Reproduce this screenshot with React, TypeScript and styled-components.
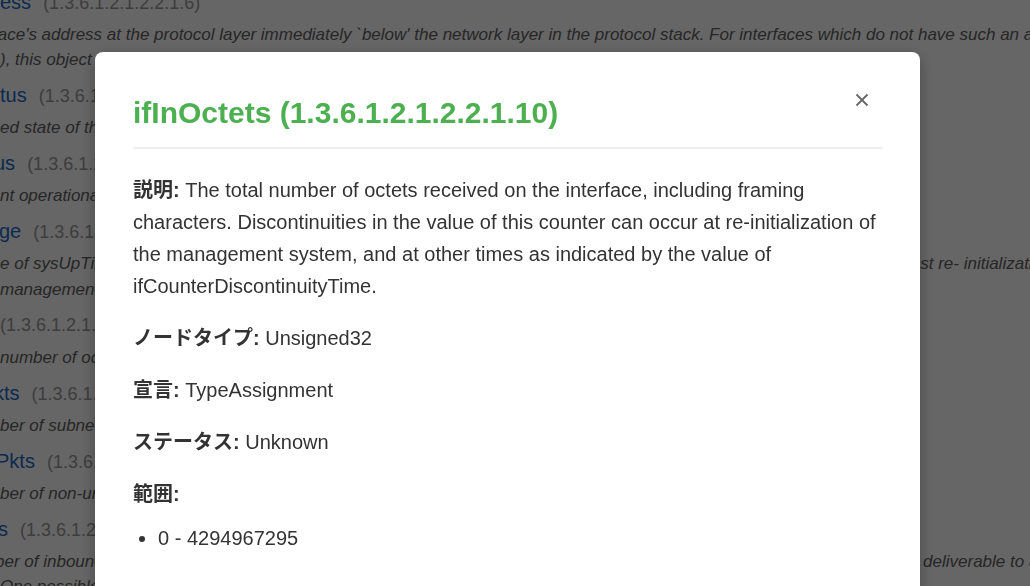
import React from "react";
import styled, { createGlobalStyle } from "styled-components";

const GlobalStyle = createGlobalStyle`
  html, body {
    margin: 0;
    padding: 0;
    overflow: hidden;
    background: #ffffff;
    font-family: "Liberation Sans", Arial, "Noto Sans CJK JP", sans-serif;
  }
  * { box-sizing: border-box; }
`;

/* ---------- background page (MIB object list, scrolled) ---------- */

const Page = styled.div`
  margin-top: -13.5px;
  white-space: nowrap;
  overflow: hidden;
  width: 1030px;
`;

const Entry = styled.section`
  margin-bottom: 7.5px;
`;

const EntryTitle = styled.div<{ $shift?: number }>`
  line-height: 30px;
  height: 30px;
  margin-bottom: 5px;
  text-indent: ${(p) => p.$shift ?? 0}px;
`;

const Name = styled.a`
  font-size: 20px;
  color: #1e6ac8;
  text-decoration: none;
`;

const Oid = styled.span<{ $flush?: boolean }>`
  font-size: 18px;
  color: #999999;
  margin-left: ${(p) => (p.$flush ? "0" : "12px")};
`;

const Desc = styled.div<{ $shift?: number }>`
  font-size: 17px;
  line-height: 25.5px;
  font-style: italic;
  color: #616161;
  text-indent: ${(p) => p.$shift ?? 0}px;
`;

/* ---------- modal ---------- */

const Overlay = styled.div`
  position: fixed;
  inset: 0;
  background: rgba(0, 0, 0, 0.6);
  display: flex;
  justify-content: center;
  align-items: flex-start;
  padding: 52px 15px 0 0;
`;

const Dialog = styled.div`
  width: 825px;
  background: #ffffff;
  border-radius: 8px;
  box-shadow: 0 5px 15px rgba(0, 0, 0, 0.3);
  padding: 43px 37px 40px 38px;
  font-family: "Liberation Sans", Arial, "Noto Sans CJK JP", sans-serif;
  color: #333333;
`;

const Header = styled.header`
  display: flex;
  justify-content: space-between;
  align-items: flex-start;
  padding-bottom: 16px;
  border-bottom: 2px solid #eeeeee;
`;

const Title = styled.h2`
  margin: 0;
  font-size: 30px;
  line-height: 36px;
  font-weight: 700;
  color: #4caf50;
`;

const CloseButton = styled.button`
  width: 20px;
  height: 20px;
  margin: -5px 11px 0 0;
  padding: 0;
  border: none;
  background: transparent;
  display: flex;
  align-items: center;
  justify-content: center;
  cursor: pointer;
`;

const Body = styled.div`
  padding-top: 25px;
  font-size: 20px;
  line-height: 32px;
`;

const Field = styled.p`
  margin: 0 0 20px;
`;

const Label = styled.strong`
  font-weight: 700;
  color: #333333;
`;

const RangeLabel = styled.div`
  font-weight: 700;
  margin-bottom: 12px;
`;

const RangeList = styled.ul`
  margin: 0;
  padding-left: 25px;
  list-style: disc;
`;

type Line = { text: string; shift?: number };

const entries: { name: string; oid: string; flush?: boolean; shift?: number; lines: Line[] }[] = [
  {
    name: "ess",
    oid: "(1.3.6.1.2.1.2.2.1.6)",
    lines: [
      {
        text: "face's address at the protocol layer immediately `below' the network layer in the protocol stack. For interfaces which do not have such an address (e.g., a serial line",
        shift: -7,
      },
      { text: "), this object should contain an octet string of zero length." },
    ],
  },
  {
    name: "tus",
    oid: "(1.3.6.1.2.1.2.2.1.7)",
    lines: [{ text: "ed state of the interface. The testing(3) state indicates that no operational packets can be passed." }],
  },
  {
    name: "us",
    oid: "(1.3.6.1.2.1.2.2.1.8)",
    shift: -6,
    lines: [{ text: "nt operational state of the interface. The testing(3) state indicates that no operational packets can be passed." }],
  },
  {
    name: "ge",
    oid: "(1.3.6.1.2.1.2.2.1.9)",
    shift: -1,
    lines: [
      {
        text: "e of sysUpTime at the time the interface entered its current operational state. If the current state was entered prior to the last re- initialization of the local network",
      },
      { text: "management subsystem, then this object contains a zero value." },
    ],
  },
  {
    name: "",
    oid: "(1.3.6.1.2.1.2.2.1.10)",
    flush: true,
    lines: [{ text: "number of octets received on the interface, including framing characters." }],
  },
  {
    name: "kts",
    oid: "(1.3.6.1.2.1.2.2.1.11)",
    shift: -6,
    lines: [{ text: "ber of subnetwork-unicast packets delivered to a higher-layer protocol." }],
  },
  {
    name: "Pkts",
    oid: "(1.3.6.1.2.1.2.2.1.12)",
    shift: -4,
    lines: [{ text: "ber of non-unicast packets delivered to a higher-layer protocol." }],
  },
  {
    name: "s",
    oid: "(1.3.6.1.2.1.2.2.1.13)",
    shift: -2,
    lines: [
      {
        text: "ber of inbound packets which were chosen to be discarded even though no errors had been detected to prevent their being deliverable to a higher-layer protocol.",
        shift: -5,
      },
      { text: "One possible reason for discarding such a packet could be to free up buffer space." },
    ],
  },
];

export default function App() {
  return (
    <>
      <GlobalStyle />
      <Page>
        {entries.map((e) => (
          <Entry key={e.oid}>
            <EntryTitle $shift={e.shift}>
              {e.name && <Name href="#">{e.name}</Name>}
              <Oid $flush={e.flush}>{e.oid}</Oid>
            </EntryTitle>
            {e.lines.map((l) => (
              <Desc key={l.text} $shift={l.shift}>
                {l.text}
              </Desc>
            ))}
          </Entry>
        ))}
      </Page>

      <Overlay>
        <Dialog role="dialog" aria-modal="true">
          <Header>
            <Title>ifInOctets (1.3.6.1.2.1.2.2.1.10)</Title>
            <CloseButton aria-label="閉じる">
              <svg width="14" height="14" viewBox="0 0 14 14">
                <path d="M1.5 1.5 L12.5 12.5 M12.5 1.5 L1.5 12.5" stroke="#666666" strokeWidth="1.8" />
              </svg>
            </CloseButton>
          </Header>
          <Body>
            <Field>
              <Label>説明:</Label> The total number of octets received on the interface, including framing
              characters. Discontinuities in the value of this counter can occur at re-initialization of the
              management system, and at other times as indicated by the value of ifCounterDiscontinuityTime.
            </Field>
            <Field>
              <Label>ノードタイプ:</Label> Unsigned32
            </Field>
            <Field>
              <Label>宣言:</Label> TypeAssignment
            </Field>
            <Field>
              <Label>ステータス:</Label> Unknown
            </Field>
            <RangeLabel>範囲:</RangeLabel>
            <RangeList>
              <li>0 - 4294967295</li>
            </RangeList>
          </Body>
        </Dialog>
      </Overlay>
    </>
  );
}
